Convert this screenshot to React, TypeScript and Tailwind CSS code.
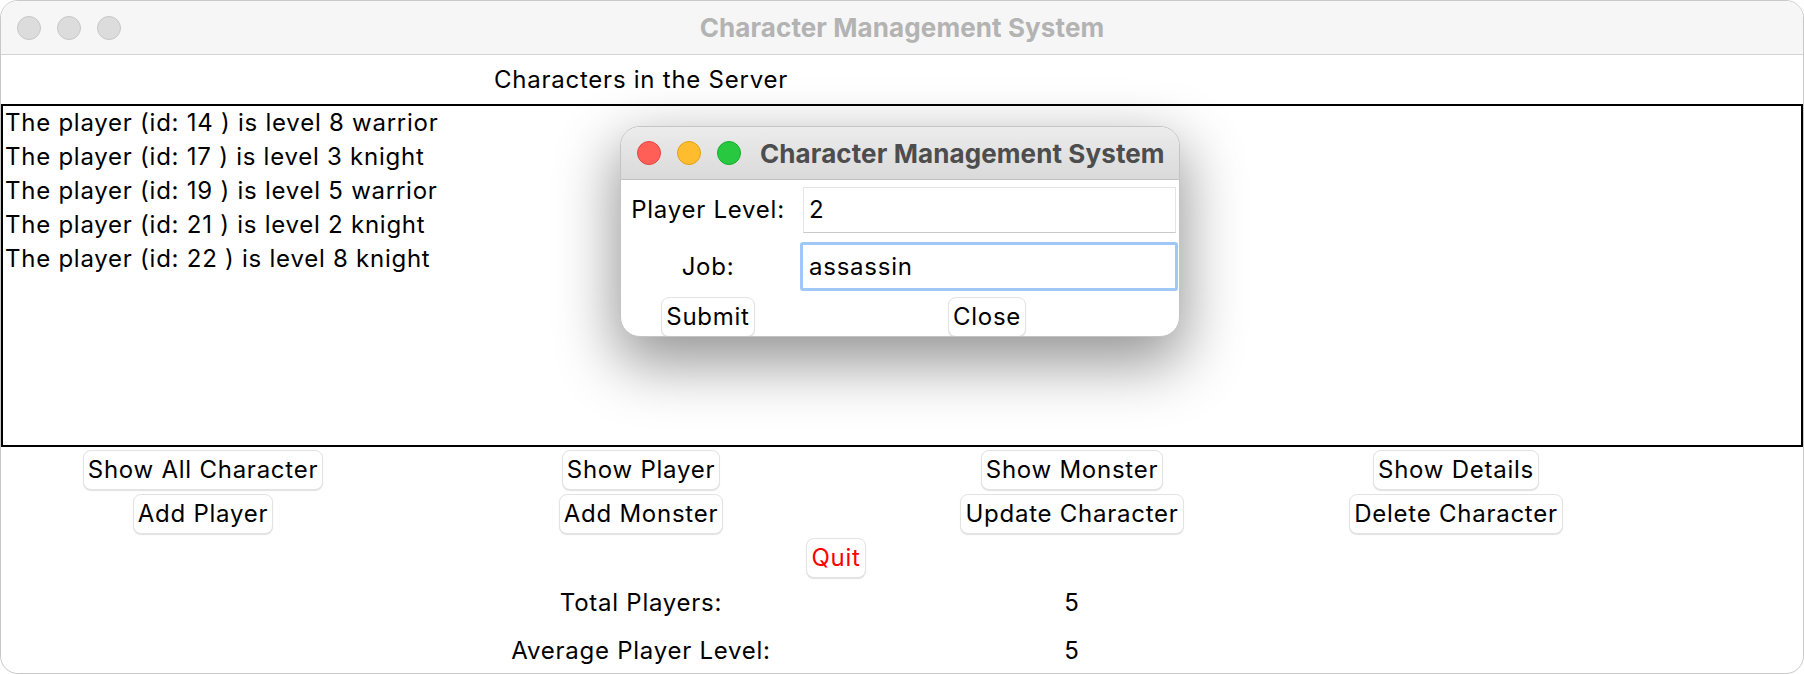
import React from 'react';

const FONT = "font-['Inter','Liberation_Sans',sans-serif] tracking-[0.75px]";

const players = [
    'The player (id: 14 ) is level 8 warrior',
    'The player (id: 17 ) is level 3 knight',
    'The player (id: 19 ) is level 5 warrior',
    'The player (id: 21 ) is level 2 knight',
    'The player (id: 22 ) is level 8 knight',
];

const MacButton = ({ label, className = '' }: { label: string; className?: string }) => (
    <div className={`h-[40px] px-[4px] flex items-center bg-white rounded-[8px] border border-[#e3e3e3] shadow-[0_1px_1px_rgba(0,0,0,0.12)] text-[24px] leading-none ${className}`}>
        {label}
    </div>
);

const Light = ({ color }: { color: string }) => (
    <div className={`w-[24px] h-[24px] rounded-full border ${color}`} />
);

export default function App() {
    return (
        <div className={`relative w-[1804px] h-[674px] bg-white overflow-hidden text-black ${FONT}`}>
            {/* main window */}
            <div className="h-full flex flex-col rounded-[18px] border border-[#c9c9c9] overflow-hidden">
                <div className="h-[54px] shrink-0 grid grid-cols-[1fr_auto_1fr] items-center bg-[#f6f6f6] border-b border-[#d3d3d3]">
                    <div className="flex gap-[16px] pl-[16px]">
                        <Light color="bg-[#dcdcdc] border-[#c6c6c6]" />
                        <Light color="bg-[#dcdcdc] border-[#c6c6c6]" />
                        <Light color="bg-[#dcdcdc] border-[#c6c6c6]" />
                    </div>
                    <div className="text-[26px] font-bold tracking-[0.1px] text-[#b3b3b3]">Character Management System</div>
                    <div />
                </div>

                <div className="grid grid-cols-[404px_472px_390px_378px_1fr] h-[49px] shrink-0 items-center text-[24px]">
                    <div />
                    <div className="text-center">Characters in the Server</div>
                </div>

                <div className="h-[343px] shrink-0 border-2 border-black text-[24px] leading-[34px] pl-[2px]">
                    {players.map(p => <div key={p}>{p}</div>)}
                </div>

                <div className="grid grid-cols-[404px_472px_390px_378px_1fr] grid-rows-[44px_44px_44px_45px_52px] shrink-0 items-center pt-[1px] text-[24px]">
                    <div className="flex justify-center"><MacButton label="Show All Character" /></div>
                    <div className="flex justify-center"><MacButton label="Show Player" /></div>
                    <div className="flex justify-center"><MacButton label="Show Monster" /></div>
                    <div className="flex justify-center"><MacButton label="Show Details" /></div>
                    <div />

                    <div className="flex justify-center"><MacButton label="Add Player" /></div>
                    <div className="flex justify-center"><MacButton label="Add Monster" /></div>
                    <div className="flex justify-center"><MacButton label="Update Character" /></div>
                    <div className="flex justify-center"><MacButton label="Delete Character" /></div>
                    <div />

                    <div />
                    <div className="col-span-2 flex justify-center"><MacButton label="Quit" className="text-[#ff0000]" /></div>
                    <div />
                    <div />

                    <div />
                    <div className="text-center">Total Players:</div>
                    <div className="text-center">5</div>
                    <div />
                    <div />

                    <div />
                    <div className="text-center">Average Player Level:</div>
                    <div className="text-center">5</div>
                    <div />
                    <div />
                </div>
            </div>

            {/* dialog */}
            <div className="absolute left-[620px] top-[126px] w-[560px] h-[211px] rounded-[20px] border border-[#c4c4c4] bg-white overflow-hidden shadow-[0_22px_60px_4px_rgba(0,0,0,0.42)] flex flex-col">
                <div className="h-[53px] shrink-0 flex items-center bg-gradient-to-b from-[#ececec] to-[#dadada] border-b border-[#c2c2c2] pl-[16px]">
                    <div className="flex gap-[16px]">
                        <Light color="bg-[#ff5f57] border-[#e2463f]" />
                        <Light color="bg-[#febc2e] border-[#e1a116]" />
                        <Light color="bg-[#28c840] border-[#14ae2b]" />
                    </div>
                    <div className="ml-[19px] text-[26px] font-bold tracking-[0.1px] text-[#4d4d4d] whitespace-nowrap">Character Management System</div>
                </div>
                <div className="flex flex-col text-[24px]">
                    <div className="flex items-center mt-[7px] h-[46px]">
                        <div className="w-[174px] text-center">Player Level:</div>
                        <div className="flex-1 ml-[8px] mr-[3px] h-full flex items-center pl-[5px] border border-[#e4e4e4] border-b-[#c9c9c9]">2</div>
                    </div>
                    <div className="flex items-center mt-[9px] h-[49px]">
                        <div className="w-[174px] text-center">Job:</div>
                        <div className="flex-1 ml-[5px] mr-[1px] h-full flex items-center pl-[6px] border-[3px] border-[#a0c8f6] rounded-[3px]">assassin</div>
                    </div>
                    <div className="flex items-center mt-[6px] h-[39px]">
                        <div className="w-[174px] flex justify-center"><MacButton label="Submit" className="h-[39px]" /></div>
                        <div className="flex-1 flex justify-center"><MacButton label="Close" className="h-[39px]" /></div>
                    </div>
                </div>
            </div>
        </div>
    );
}
